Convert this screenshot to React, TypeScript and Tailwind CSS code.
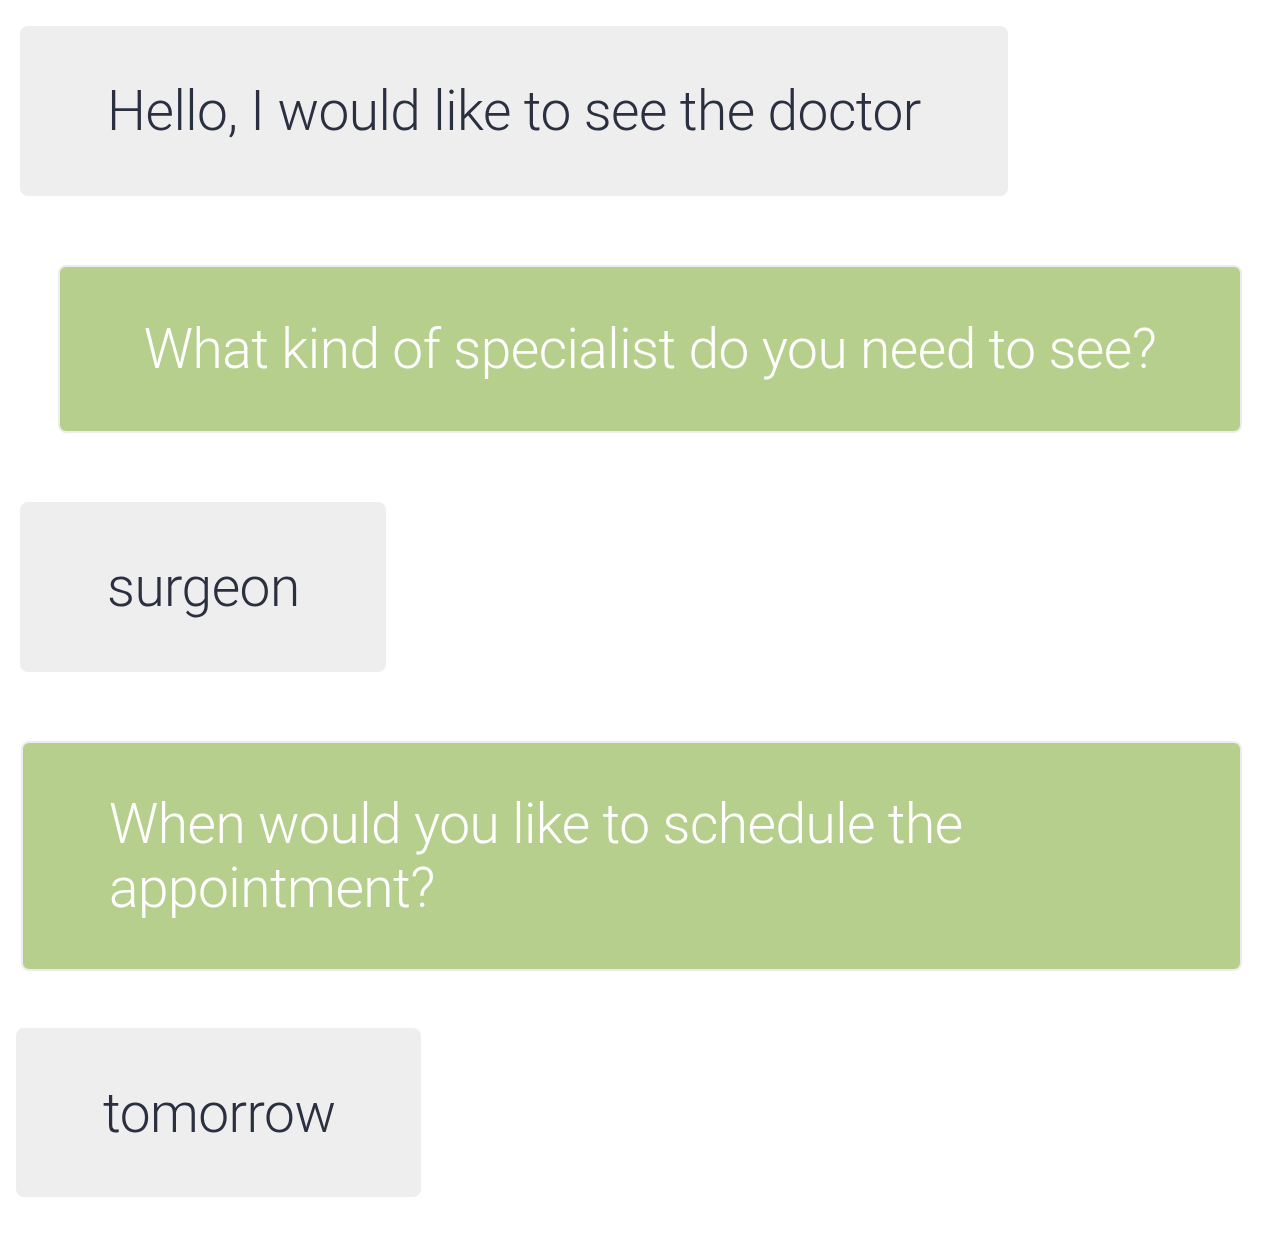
import React from 'react';

type Msg = { text: string; from: 'user' | 'bot'; box: string; align?: string };

const messages: Msg[] = [
  { text: 'Hello, I would like to see the doctor', from: 'user', box: 'ml-[20px] w-[988px] h-[170px] pl-[87px] pr-[30px]' },
  { text: 'What kind of specialist do you need to see?', from: 'bot', box: 'ml-[58px] w-[1184px] h-[168px] px-[30px]', align: 'text-center' },
  { text: 'surgeon', from: 'user', box: 'ml-[20px] w-[366px] h-[170px] pl-[87px] pr-[20px]' },
  { text: 'When would you like to schedule the appointment?', from: 'bot', box: 'ml-[21px] w-[1221px] h-[230px] pl-[86px] pr-[86px]' },
  { text: 'tomorrow', from: 'user', box: 'ml-[16px] w-[405px] h-[169px] pl-[87px] pr-[20px]' },
];

export default function App() {
  return (
    <div className="min-h-[1248px] bg-white pt-[26px] font-['Roboto',sans-serif] font-light">
      <div className="flex flex-col items-start gap-[69px]">
        {messages.map((m, i) => (
          <div
            key={i}
            className={`${m.box} flex items-center rounded-[8px] text-[55px] leading-[64px] tracking-[-0.5px] ${
              m.from === 'bot'
                ? 'bg-[#b7cf8c] text-white border-2 border-[#ececec]'
                : 'bg-[#eeeeee] text-[#2b3040]'
            } ${i === 4 ? '-mt-[12px]' : ''}`}
          >
            <p className={`w-full ${m.align ?? ''}`}>{m.text}</p>
          </div>
        ))}
      </div>
    </div>
  );
}
